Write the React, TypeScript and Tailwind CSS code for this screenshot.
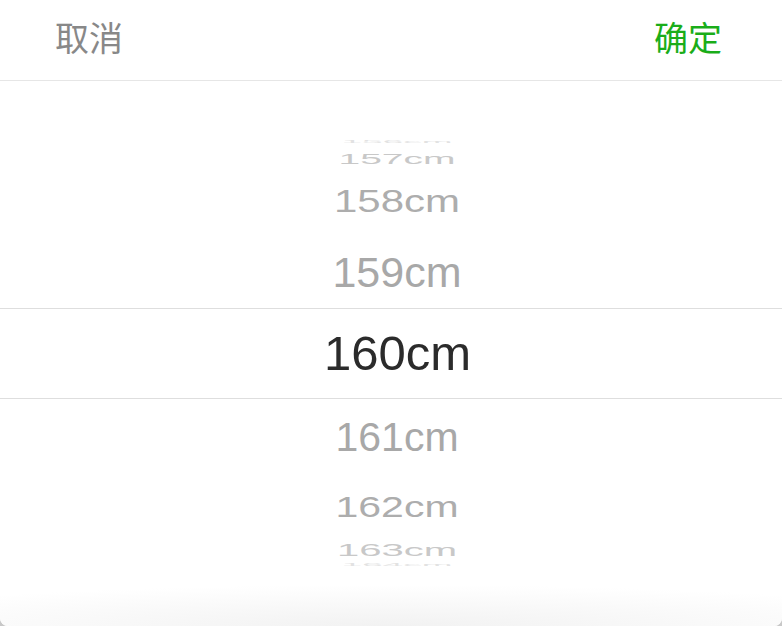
import React from "react";

type Row = {
  label: string;
  h: string;
  size: string;
  color: string;
  sy: number;
};

// wheel rows above and below the selected value, roughly following the cylinder projection
const above: Row[] = [
  { label: "156cm", h: "h-[13px]", size: "text-[37px]", color: "text-[#e2e2e2]", sy: 0.08 },
  { label: "157cm", h: "h-[20px]", size: "text-[39px]", color: "text-[#c8c8c8]", sy: 0.39 },
  { label: "158cm", h: "h-[68px]", size: "text-[42px]", color: "text-[#adadad]", sy: 0.73 },
  { label: "159cm", h: "h-[72px]", size: "text-[43px]", color: "text-[#a8a8a8]", sy: 1 },
];

const below: Row[] = [
  { label: "161cm", h: "h-[76px]", size: "text-[41px]", color: "text-[#a8a8a8]", sy: 1 },
  { label: "162cm", h: "h-[64px]", size: "text-[41px]", color: "text-[#adadad]", sy: 0.72 },
  { label: "163cm", h: "h-[22px]", size: "text-[40px]", color: "text-[#c8c8c8]", sy: 0.42 },
  { label: "164cm", h: "h-[6px]", size: "text-[37px]", color: "text-[#e2e2e2]", sy: 0.08 },
];

const font = { fontFamily: '"Liberation Sans", Arial, "Noto Sans CJK SC", sans-serif' };

function WheelRow({ row }: { row: Row }) {
  return (
    <div className={`${row.h} flex items-center justify-center pl-[12px] overflow-visible`}>
      <span
        className={`${row.size} ${row.color} leading-none`}
        style={{ transform: `scaleY(${row.sy})` }}
      >
        {row.label}
      </span>
    </div>
  );
}

export default function App() {
  return (
    <div className="w-[782px] h-[626px] bg-[#c8c8c8] overflow-hidden" style={font}>
      <div className="h-full bg-white rounded-b-[8px] flex flex-col overflow-hidden">
        <div className="h-[81px] shrink-0 flex items-center justify-between pl-[55px] pr-[60px] pb-[3px] border-b border-[#e6e6e6]">
          <button className="text-[34px] leading-none text-[#888888]">取消</button>
          <button className="text-[34px] leading-none text-[#1aad19]">确定</button>
        </div>

        <div className="h-[54px] shrink-0" />
        {above.map((r) => (
          <WheelRow key={r.label} row={r} />
        ))}

        <div className="h-[91px] shrink-0 border-y border-[#dedede] flex items-center justify-center pl-[13px]">
          <span className="text-[49px] leading-none text-[#2b2b2b]">160cm</span>
        </div>

        {below.map((r) => (
          <WheelRow key={r.label} row={r} />
        ))}

        <div className="flex-1 bg-[radial-gradient(ellipse_75%_70%_at_50%_100%,#f2f2f2,#ffffff)]" />
      </div>
    </div>
  );
}
